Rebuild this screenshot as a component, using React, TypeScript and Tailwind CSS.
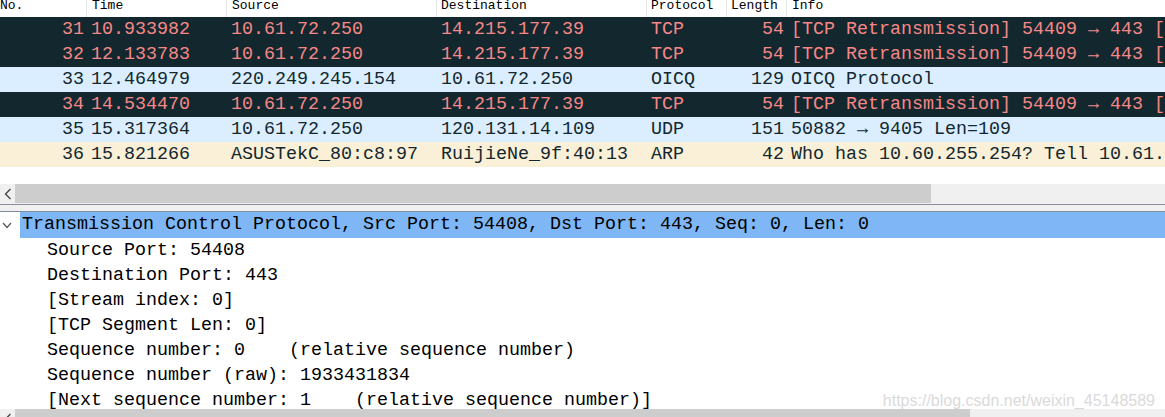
import React from "react";

type Row = {
  no: string;
  time: string;
  src: string;
  dst: string;
  proto: string;
  len: string;
  info: string;
  kind: "bad" | "udp" | "arp";
};

const rows: Row[] = [
  { no: "31", time: "10.933982", src: "10.61.72.250", dst: "14.215.177.39", proto: "TCP", len: "54", info: "[TCP Retransmission] 54409 → 443 [SYN] Seq=0 Win=64240 Len=0 MSS=1460", kind: "bad" },
  { no: "32", time: "12.133783", src: "10.61.72.250", dst: "14.215.177.39", proto: "TCP", len: "54", info: "[TCP Retransmission] 54409 → 443 [SYN] Seq=0 Win=64240 Len=0 MSS=1460", kind: "bad" },
  { no: "33", time: "12.464979", src: "220.249.245.154", dst: "10.61.72.250", proto: "OICQ", len: "129", info: "OICQ Protocol", kind: "udp" },
  { no: "34", time: "14.534470", src: "10.61.72.250", dst: "14.215.177.39", proto: "TCP", len: "54", info: "[TCP Retransmission] 54409 → 443 [SYN] Seq=0 Win=64240 Len=0 MSS=1460", kind: "bad" },
  { no: "35", time: "15.317364", src: "10.61.72.250", dst: "120.131.14.109", proto: "UDP", len: "151", info: "50882 → 9405 Len=109", kind: "udp" },
  { no: "36", time: "15.821266", src: "ASUSTekC_80:c8:97", dst: "RuijieNe_9f:40:13", proto: "ARP", len: "42", info: "Who has 10.60.255.254? Tell 10.61.72.250", kind: "arp" },
];

const kindCls: Record<Row["kind"], string> = {
  bad: "bg-[#12272e] text-[#f78787]",
  udp: "bg-[#daeeff] text-[#12272e]",
  arp: "bg-[#faf0d7] text-[#12272e]",
};

const mono = { fontFamily: '"Liberation Mono", "DejaVu Sans Mono", monospace' };

const treeChildren = [
  "Source Port: 54408",
  "Destination Port: 443",
  "[Stream index: 0]",
  "[TCP Segment Len: 0]",
  "Sequence number: 0    (relative sequence number)",
  "Sequence number (raw): 1933431834",
  "[Next sequence number: 1    (relative sequence number)]",
  "Acknowledgment number: 0",
];

function HScroll({ thumb }: { thumb: number }) {
  return (
    <div className="flex h-[19px] w-full shrink-0 bg-[#f0f0f0]">
      <div className="flex h-full w-[15px] shrink-0 items-center justify-center">
        <svg width="8" height="12" viewBox="0 0 8 12">
          <path d="M6.5 1 L1.5 6 L6.5 11" fill="none" stroke="#404040" strokeWidth="1.3" />
        </svg>
      </div>
      <div className="h-full bg-[#cdcdcd]" style={{ width: thumb }} />
      <div className="h-full flex-1" />
    </div>
  );
}

export default function App() {
  return (
    <div
      className="relative h-[417px] w-[1165px] overflow-hidden bg-white"
      style={mono}
    >
      {/* Packet list */}
      <div className="h-[184px] w-full overflow-hidden whitespace-nowrap">
        {/* Header */}
        <div className="flex h-[17px] bg-white text-[13px] leading-[12px] text-black">
          <div className="w-[87px] shrink-0 border-r border-[#e5e5e5] pl-0">No.</div>
          <div className="w-[140px] shrink-0 border-r border-[#e5e5e5] pl-[5px]">Time</div>
          <div className="w-[210px] shrink-0 border-r border-[#e5e5e5] pl-[5px]">Source</div>
          <div className="w-[210px] shrink-0 border-r border-[#e5e5e5] pl-[4px]">Destination</div>
          <div className="w-[80px] shrink-0 border-r border-[#e5e5e5] pl-[4px]">Protocol</div>
          <div className="w-[60px] shrink-0 border-r border-[#e5e5e5] pl-[4px]">Length</div>
          <div className="flex-1 pl-[5px]">Info</div>
        </div>
        {rows.map((r) => (
          <div key={r.no} className={`flex h-[25px] items-center text-[18.33px] leading-[25px] ${kindCls[r.kind]}`}>
            <div className="w-[87px] shrink-0 pr-[3px] text-right">{r.no}</div>
            <div className="w-[140px] shrink-0 pl-[4px]">{r.time}</div>
            <div className="w-[210px] shrink-0 pl-[4px]">{r.src}</div>
            <div className="w-[210px] shrink-0 pl-[4px]">{r.dst}</div>
            <div className="w-[80px] shrink-0 pl-[4px]">{r.proto}</div>
            <div className="w-[60px] shrink-0 pr-[3px] text-right">{r.len}</div>
            <div className="flex-1 pl-[4px]">{r.info}</div>
          </div>
        ))}
      </div>

      <HScroll thumb={916} />

      {/* Splitter */}
      <div className="h-[9px] w-full border-t border-[#f0f0f0] bg-[#f0f0f0]">
        <div className="h-px w-full bg-[#8a8f99]" />
        <div className="h-[6px] w-full" />
        <div className="h-px w-full bg-[#7e8ba0]" />
      </div>

      {/* Details tree */}
      <div className="h-[197px] w-full overflow-hidden whitespace-nowrap text-[18.33px] leading-[25px] text-black">
        <div className="flex h-[26px] items-center">
          <div className="flex w-[20px] shrink-0 items-center justify-center pr-[6px]">
            <svg width="10" height="7" viewBox="0 0 10 7">
              <path d="M1 1 L5 5.5 L9 1" fill="none" stroke="#5a5a5a" strokeWidth="1.3" />
            </svg>
          </div>
          <div className="h-full flex-1 bg-[#7fb6f5] pl-[2px] leading-[25px]">
            Transmission Control Protocol, Src Port: 54408, Dst Port: 443, Seq: 0, Len: 0
          </div>
        </div>
        {treeChildren.map((t) => (
          <div key={t} className="h-[25px] pl-[47px] whitespace-pre">
            {t}
          </div>
        ))}
      </div>

      <HScroll thumb={955} />

      {/* Watermark */}
      <div
        className="absolute right-[10px] top-[391px] text-[16px] leading-[20px] text-[#dadada]"
        style={{ fontFamily: '"Liberation Sans", Arial, sans-serif' }}
      >
        https://blog.csdn.net/weixin_45148589
      </div>
    </div>
  );
}
